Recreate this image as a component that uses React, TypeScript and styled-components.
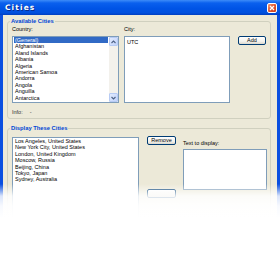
import styled, { createGlobalStyle } from 'styled-components';

const GlobalStyle = createGlobalStyle`
  html, body {
    margin: 0;
    padding: 0;
    background: #fff;
  }
  body {
    font-family: "Liberation Sans", Arial, sans-serif;
    overflow: hidden;
  }
`;

const Screen = styled.div`
  position: relative;
  width: 280px;
  height: 270px;
  overflow: hidden;
`;

const Window = styled.div`
  display: flex;
  flex-direction: column;
  height: 100%;
  background: #0a4fe0;
`;

const TitleBar = styled.div`
  height: 15px;
  flex: none;
  display: flex;
  align-items: center;
  justify-content: space-between;
  padding: 0 3px 0 5px;
  background: linear-gradient(#3d8cf8 0, #0a60ee 20%, #0054e6 55%, #0050de 85%, #003fc0 100%);
`;

const Title = styled.span`
  color: #fff;
  font-family: "DejaVu Sans", sans-serif;
  font-weight: bold;
  font-size: 7.5px;
  letter-spacing: 1.1px;
  text-shadow: 1px 1px 0 #0a2a8a;
`;

const CloseButton = styled.div`
  width: 10px;
  height: 10px;
  box-sizing: border-box;
  border: 1px solid #fff;
  border-radius: 2px;
  background: linear-gradient(135deg, #f29a78, #e0552f 50%, #c8401e);
  display: flex;
  align-items: center;
  justify-content: center;
`;

const Body = styled.div`
  flex: 1;
  margin: 0 3px;
  background: #ece9d8;
  padding: 3px 6px 0 4px;
  display: flex;
  flex-direction: column;
  gap: 6px;
  font-size: 5.5px;
  color: #000;
`;

const Group = styled.fieldset`
  margin: 0;
  padding: 1px 4px 3px 4px;
  border: 1px solid #d0d0bf;
  border-radius: 3px;
  min-width: 0;
  display: flex;
  flex-direction: column;
`;

const Legend = styled.legend`
  padding: 0 1px;
  margin-left: -2px;
  color: #0046d5;
  font-weight: bold;
  font-size: 5.8px;
  line-height: 7px;
`;

const Row = styled.div`
  display: flex;
  align-items: flex-start;
`;

const Column = styled.div<{ $w: number; $gap?: number }>`
  width: ${(p) => p.$w}px;
  flex: none;
  display: flex;
  flex-direction: column;
  margin-right: ${(p) => p.$gap ?? 0}px;
`;

const Label = styled.div`
  line-height: 6px;
  height: 6px;
  margin-bottom: 4px;
  white-space: nowrap;
`;

const ListBox = styled.div<{ $h: number }>`
  height: ${(p) => p.$h}px;
  box-sizing: border-box;
  border: 1px solid #7f9db9;
  background: #fff;
  display: flex;
  overflow: hidden;
`;

const Items = styled.div`
  flex: 1;
  padding: 0 1px;
  min-width: 0;
`;

const Item = styled.div<{ $selected?: boolean }>`
  line-height: 6.4px;
  height: 6.4px;
  padding-left: 1px;
  white-space: nowrap;
  background: ${(p) => (p.$selected ? '#316ac5' : 'transparent')};
  color: ${(p) => (p.$selected ? '#fff' : '#000')};
`;

const ScrollBar = styled.div`
  width: 9px;
  flex: none;
  display: flex;
  flex-direction: column;
  background: #f3f1ec;
`;

const ScrollArrow = styled.div`
  height: 9px;
  box-sizing: border-box;
  border: 1px solid #b7cbf4;
  border-radius: 1px;
  background: linear-gradient(135deg, #e1eafe, #c1d3fb);
  display: flex;
  align-items: center;
  justify-content: center;
`;

const Track = styled.div`
  flex: 1;
`;

const Button = styled.button<{ $w: number }>`
  width: ${(p) => p.$w}px;
  height: 9px;
  flex: none;
  padding: 0;
  box-sizing: border-box;
  border: 1px solid #003c74;
  border-radius: 2px;
  background: linear-gradient(#ffffff, #f4f3ee 60%, #dcd8cc);
  font-family: inherit;
  font-size: 5.5px;
  line-height: 7px;
  color: #000;
`;

const TextBox = styled.div<{ $h: number }>`
  height: ${(p) => p.$h}px;
  box-sizing: border-box;
  border: 1px solid #7f9db9;
  background: #fff;
  padding: 2px 2px;
  line-height: 6px;
`;

const InfoRow = styled.div`
  display: flex;
  gap: 7px;
  line-height: 6px;
  margin-top: 6px;
  color: #333;
`;

const ButtonColumn = styled.div`
  display: flex;
  flex-direction: column;
  gap: 44px;
  margin: 3px 7px 0 0;
`;

const Fade = styled.div`
  position: absolute;
  left: 0;
  right: 0;
  top: 184px;
  bottom: 0;
  pointer-events: none;
  background: linear-gradient(
    rgba(255, 255, 255, 0) 0,
    rgba(255, 255, 255, 0.85) 12px,
    rgba(255, 255, 255, 0.97) 22px,
    #fff 34px
  );
`;

const Arrow = ({ up }: { up?: boolean }) => (
  <svg width="5" height="4" viewBox="0 0 5 4">
    <path
      d={up ? 'M0.5 3 L2.5 1 L4.5 3' : 'M0.5 1 L2.5 3 L4.5 1'}
      fill="none"
      stroke="#4d6185"
      strokeWidth="1.1"
    />
  </svg>
);

const countries = [
  '(General)',
  'Afghanistan',
  'Aland Islands',
  'Albania',
  'Algeria',
  'American Samoa',
  'Andorra',
  'Angola',
  'Anguilla',
  'Antarctica',
];

const cities = [
  'Los Angeles, United States',
  'New York City, United States',
  'London, United Kingdom',
  'Moscow, Russia',
  'Beijing, China',
  'Tokyo, Japan',
  'Sydney, Australia',
];

export default function App() {
  return (
    <Screen>
      <GlobalStyle />
      <Window>
        <TitleBar>
          <Title>Cities</Title>
          <CloseButton>
            <svg width="6" height="6" viewBox="0 0 6 6">
              <path d="M1 1 L5 5 M5 1 L1 5" stroke="#fff" strokeWidth="1.3" />
            </svg>
          </CloseButton>
        </TitleBar>
        <Body>
          <Group>
            <Legend>Available Cities</Legend>
            <Row>
              <Column $w={107} $gap={5}>
                <Label>Country:</Label>
                <ListBox $h={67}>
                  <Items>
                    {countries.map((c, i) => (
                      <Item key={c} $selected={i === 0}>
                        {c}
                      </Item>
                    ))}
                  </Items>
                  <ScrollBar>
                    <ScrollArrow>
                      <Arrow up />
                    </ScrollArrow>
                    <Track />
                    <ScrollArrow>
                      <Arrow />
                    </ScrollArrow>
                  </ScrollBar>
                </ListBox>
              </Column>
              <Column $w={106} $gap={8}>
                <Label>City:</Label>
                <TextBox $h={67}>UTC</TextBox>
              </Column>
              <Column $w={28}>
                <Label />
                <Button $w={28}>Add</Button>
              </Column>
            </Row>
            <InfoRow>
              <span>Info:</span>
              <span>-</span>
            </InfoRow>
          </Group>
          <Group>
            <Legend>Display These Cities</Legend>
            <Row>
              <Column $w={127} $gap={8}>
                <ListBox $h={90} style={{ marginTop: 4 }}>
                  <Items>
                    {cities.map((c) => (
                      <Item key={c}>{c}</Item>
                    ))}
                  </Items>
                </ListBox>
              </Column>
              <ButtonColumn>
                <Button $w={29}>Remove</Button>
                <Button $w={29} />
              </ButtonColumn>
              <Column $w={84}>
                <Label style={{ marginTop: 7, marginBottom: 3 }}>Text to display:</Label>
                <TextBox $h={41} />
              </Column>
            </Row>
          </Group>
        </Body>
      </Window>
      <Fade />
    </Screen>
  );
}
